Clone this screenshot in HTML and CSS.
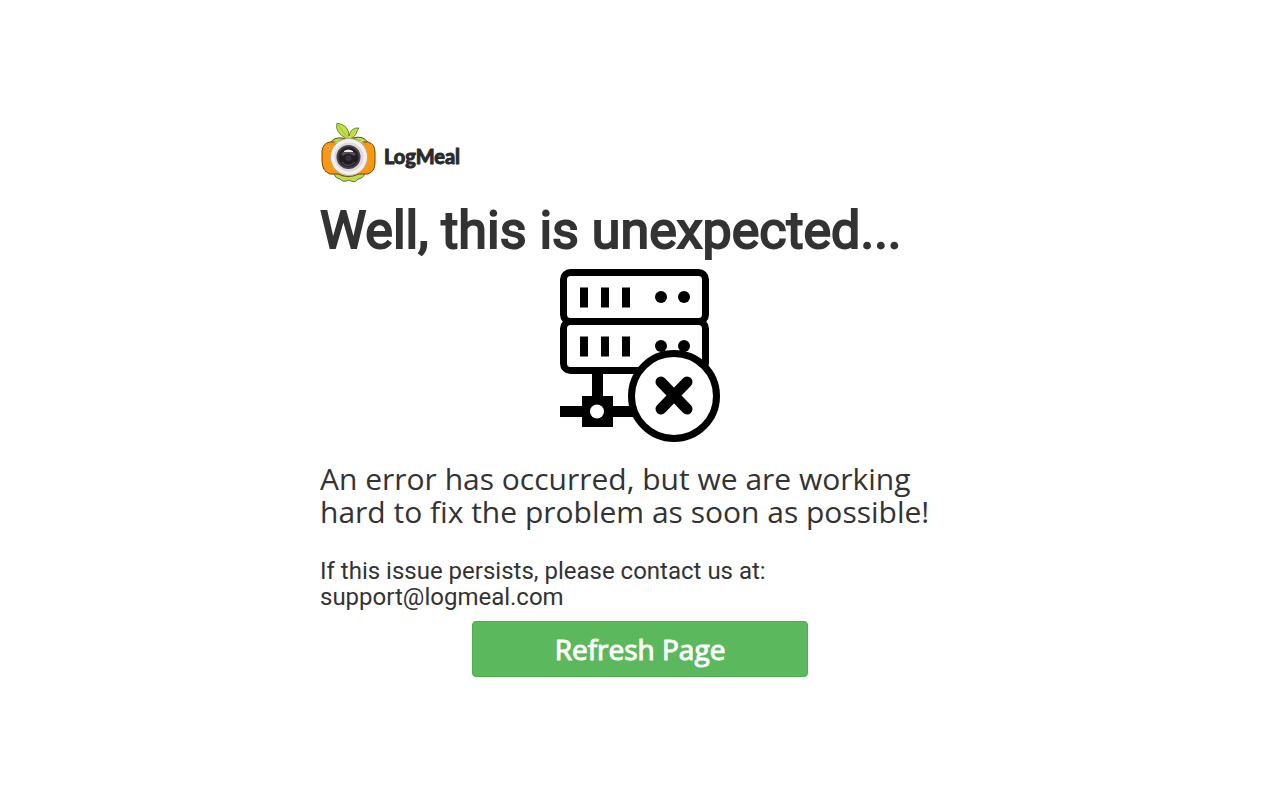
FILE: index.html
```
<!DOCTYPE html>
<html lang="en">
  <head>
    <meta charset="UTF-8" />
    <meta name="viewport" content="width=device-width, initial-scale=1.0" />
    <title>LogMeal</title>
    <link rel="stylesheet" href="styles.css">
  </head>
  <body>
    <main class="error-page">
      <div class="logo">
        <svg class="logo-mark" viewBox="0 0 60 60" aria-hidden="true">
          <path d="M10 20 Q14 14 22 15 Q28 17 33 15 Q44 12 48 20Z" fill="#b9dc51" stroke="#4b5626" />
          <path d="M13 50 Q16 56 20 56 Q23 60 29 57 Q35 61 38 56 Q43 56 45 50Z" fill="#b9dc51" stroke="#65792b" />
          <path d="M10 19 H17 Q29 11 41 19 H48 Q55 21 55 29 V40 Q55 48 48 51 H39 Q28 56 18 51 H10 Q2 48 2 38 V28 Q3 20 10 19Z" fill="#fb980d" stroke="#70420c" />
          <path d="M14 19 Q29 12 44 19 L39 22 H18Z" fill="#b9dc51" />
          <path d="M27 16 Q14 9 17 0 Q29 2 29 13 Q31 4 39 5 L37 8 Q36 14 29 16Z" fill="#c0e046" stroke="#52701d" stroke-width=".8" />
          <path d="M18 2 L28 15" fill="none" stroke="#86a83d" stroke-width=".6" />
          <circle cx="29" cy="34" r="18.5" fill="#f3f1ee" stroke="#b9aaa0" />
          <circle cx="29" cy="34" r="14.5" fill="#ddd8dc" />
          <circle cx="28.5" cy="34" r="12" fill="#484047" />
          <circle cx="28.5" cy="34" r="10" fill="#211d24" />
          <path d="M21 31 Q28 23 36 31 L34 33 Q28 28 23 33Z" fill="#554b56" />
          <path d="M24 28 Q28 25 33 28 V29 H24Z" fill="#eee8f0" />
          <circle cx="28.5" cy="35" r="3" fill="#39313b" />
          <path d="M22 39 Q28 46 35 39" fill="none" stroke="#665a66" />
          <circle cx="8" cy="25" r="1.5" fill="#f15a24" stroke="#fff1c8" stroke-width=".6" />
        </svg>
        <span class="logo-name">LogMeal</span>
      </div>
      <h1>Well, this is unexpected...</h1>
      <svg class="server-icon" viewBox="0 0 160 173" aria-hidden="true">
        <g fill="none" stroke="#000" stroke-width="7">
          <rect x="3.5" y="3.5" width="142" height="49" rx="7" />
          <rect x="3.5" y="52.5" width="142" height="49" rx="7" />
        </g>
        <path d="M20 18.5h8v20h-8z M41 18.5h8v20h-8z M62 18.5h8v20h-8z M20 67.5h8v20h-8z M41 67.5h8v20h-8z M62 67.5h8v20h-8z" />
        <circle cx="101" cy="28" r="6" />
        <circle cx="124" cy="28" r="6" />
        <circle cx="101" cy="77" r="6" />
        <circle cx="124" cy="77" r="6" />
        <path d="M32 103h11v24h10v10h30v11H53v10H22v-10H0v-11h22v-10h10z" />
        <circle cx="37" cy="142.5" r="7" fill="#fff" />
        <circle cx="114" cy="127" r="42.5" fill="#fff" stroke="#000" stroke-width="7" />
        <path d="M101 113l26 27M127 113l-26 27" stroke="#000" stroke-width="11" stroke-linecap="round" />
      </svg>
      <h2>An error has occurred, but we are working hard to fix the problem as soon as possible!</h2>
      <p>If this issue persists, please contact us at: support@logmeal.com</p>
      <button type="button" class="refresh" onclick="location.reload()">Refresh Page</button>
    </main>
  </body>
</html>
```

FILE: styles.css
```
* {
  box-sizing: border-box;
}
body {
  margin: 0;
  background: #fff;
  color: #333;
  font-family: Roboto, sans-serif;
}
.error-page {
  display: flex;
  flex-direction: column;
  justify-content: center;
  width: 50%;
  min-height: 100vh;
  margin: 0 auto;
}
.logo {
  display: flex;
  align-items: center;
  gap: 4px;
}
.logo-mark {
  width: 60px;
  height: 60px;
}
.logo-name {
  padding-top: 6px;
  color: #2b2b2b;
  font-family: Lato, sans-serif;
  font-size: 20px;
  font-weight: 700;
  -webkit-text-stroke: 1px #2b2b2b;
}
h1,
h2,
p {
  margin: 0;
  line-height: 1.1;
}
h1 {
  margin-top: 19px;
  font-size: 52px;
  font-weight: 400;
  -webkit-text-stroke: 2px #333;
}
.server-icon {
  align-self: center;
  width: 160px;
  height: 173px;
  margin-top: 10px;
}
h2 {
  margin-top: 20px;
  font-family: "Open Sans", sans-serif;
  font-size: 30px;
  font-weight: 400;
}
p {
  max-width: 460px;
  margin-top: 30px;
  font-size: 24px;
}
.refresh {
  align-self: center;
  width: 336px;
  max-width: 100%;
  height: 56px;
  margin-top: 11px;
  border: 1px solid #4cae4c;
  border-radius: 4px;
  background: #5cb85c;
  color: #fff;
  font-family: "Open Sans", sans-serif;
  font-size: 28px;
  -webkit-text-stroke: 1px #fff;
  cursor: pointer;
}
.refresh:hover {
  background: #449d44;
}
```
